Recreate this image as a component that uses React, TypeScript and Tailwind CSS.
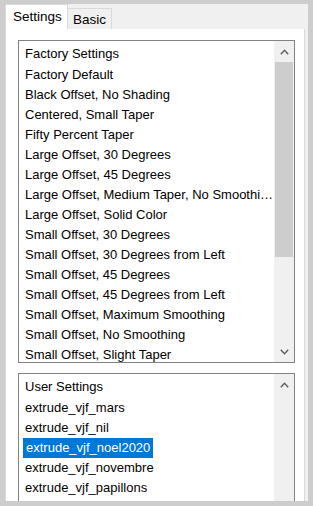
import React from "react";

const factory = [
  "Factory Default",
  "Black Offset, No Shading",
  "Centered, Small Taper",
  "Fifty Percent Taper",
  "Large Offset, 30 Degrees",
  "Large Offset, 45 Degrees",
  "Large Offset, Medium Taper, No Smoothing",
  "Large Offset, Solid Color",
  "Small Offset, 30 Degrees",
  "Small Offset, 30 Degrees from Left",
  "Small Offset, 45 Degrees",
  "Small Offset, 45 Degrees from Left",
  "Small Offset, Maximum Smoothing",
  "Small Offset, No Smoothing",
  "Small Offset, Slight Taper",
];

const user = [
  "extrude_vjf_mars",
  "extrude_vjf_nil",
  "extrude_vjf_noel2020",
  "extrude_vjf_novembre",
  "extrude_vjf_papillons",
];

function Chevron({ up }: { up?: boolean }) {
  return (
    <svg width="9" height="6" viewBox="0 0 9 6" className="block">
      <path
        d={up ? "M0.8 5.2 L4.5 1.3 L8.2 5.2" : "M0.8 0.8 L4.5 4.7 L8.2 0.8"}
        fill="none"
        stroke="#606060"
        strokeWidth="1.5"
      />
    </svg>
  );
}

function ListBox({
  title,
  items,
  selected,
  height,
  thumb,
}: {
  title: string;
  items: string[];
  selected?: string;
  height: string;
  thumb?: boolean;
}) {
  return (
    <div className={`flex border border-[#828282] bg-white ${height} overflow-hidden`}>
      <div className="flex-1 min-w-0 pt-[1px] text-[13px] text-black">
        <div className="h-[23px] pt-[2px] leading-[20px] pl-[6px] whitespace-nowrap">{title}</div>
        {items.map((it) => (
          <div key={it} className="h-[20px] leading-[20px] pl-[4px] whitespace-nowrap truncate">
            {it === selected ? (
              <span className="inline-block px-[3px] bg-[#0078d7] text-white">{it}</span>
            ) : (
              <span className="px-[2px]">{it}</span>
            )}
          </div>
        ))}
      </div>
      <div className="w-[20px] shrink-0 bg-[#f0f0f0] flex flex-col">
        <div className="h-[21px] flex items-center justify-center">
          <Chevron up />
        </div>
        {thumb && (
          <>
            <div className="h-[195px] mx-[1px] bg-[#cdcdcd]" />
            <div className="flex-1" />
            <div className="h-[21px] flex items-center justify-center">
              <Chevron />
            </div>
          </>
        )}
      </div>
    </div>
  );
}

export default function App() {
  return (
    <div
      className="w-[313px] h-[506px] bg-[#cdcdcd] pt-[4px] pl-[5px] pr-[5px] pb-[5px] overflow-hidden"
      style={{ fontFamily: '"Liberation Sans", Arial, sans-serif' }}
    >
      <div className="h-full bg-[#f0f0f0] flex flex-col pr-[3px]">
        <div className="h-[25px] flex items-end shrink-0 text-[13.5px] text-black">
          <div className="h-[25px] w-[63px] bg-white border border-b-0 border-[#d9d9d9] pl-[7px] leading-[24px]">
            Settings
          </div>
          <div className="h-[21px] w-[44px] bg-[#f0f0f0] border border-l-0 border-b-0 border-[#d9d9d9] pl-[5px] leading-[21px]">
            Basic
          </div>
        </div>
        <div className="flex-1 min-h-0 bg-white border-l border-r border-[#d9d9d9] pl-[12px] pr-[9px] pt-[11px] flex flex-col gap-[10px] overflow-hidden">
          <ListBox title="Factory Settings" items={factory} height="h-[323px] shrink-0" thumb />
          <ListBox title="User Settings" items={user} selected="extrude_vjf_noel2020" height="h-[140px] shrink-0 border-b-0" />
        </div>
      </div>
    </div>
  );
}
